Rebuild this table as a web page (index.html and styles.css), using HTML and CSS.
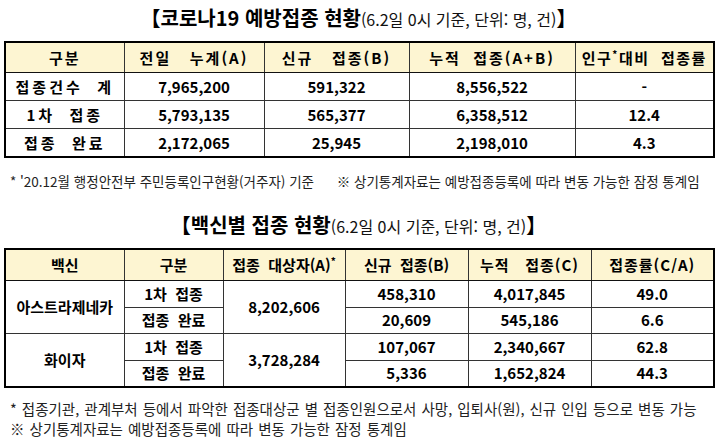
FILE: index.html
```html
<!DOCTYPE html>
<html lang="ko">
<head>
<meta charset="utf-8">
<link rel="stylesheet" href="styles.css">
</head>
<body>
<div class="page">
  <h1 class="title title-1"><span class="tb">【코로나19 예방접종 현황</span><span class="ts">(6.2일 0시 기준, 단위: 명, 건)</span><span class="tb">】</span></h1>
  <table class="grid grid-1">
    <colgroup>
      <col style="width:119px"><col style="width:140px"><col style="width:145px"><col style="width:166px"><col style="width:139px">
    </colgroup>
    <thead>
      <tr>
        <th class="sp2">구분</th>
        <th class="sp2">전일&nbsp;&nbsp;&nbsp;누계(A)</th>
        <th class="sp2">신규&nbsp;&nbsp;&nbsp;접종(B)</th>
        <th class="sp2">누적&nbsp;&nbsp;접종(A+B)</th>
        <th class="sp15">인구<sup>*</sup>대비&nbsp;&nbsp;접종률</th>
      </tr>
    </thead>
    <tbody>
      <tr><td class="sp3">접종건수&nbsp;&nbsp;계</td><td>7,965,200</td><td>591,322</td><td>8,556,522</td><td>-</td></tr>
      <tr><td class="sp3">1차&nbsp;&nbsp;접종</td><td>5,793,135</td><td>565,377</td><td>6,358,512</td><td>12.4</td></tr>
      <tr><td class="sp3">접종&nbsp;&nbsp;완료</td><td>2,172,065</td><td>25,945</td><td>2,198,010</td><td>4.3</td></tr>
    </tbody>
  </table>
  <p class="note note-1">* '20.12월 행정안전부 주민등록인구현황(거주자) 기준&nbsp;&nbsp;&nbsp;&nbsp;&nbsp; ※ 상기통계자료는 예방접종등록에 따라 변동 가능한 잠정 통계임</p>
  <h1 class="title title-2"><span class="tb">【백신별 접종 현황</span><span class="ts">(6.2일 0시 기준, 단위: 명, 건)</span><span class="tb">】</span></h1>
  <table class="grid grid-2">
    <colgroup>
      <col style="width:119px"><col style="width:99px"><col style="width:122px"><col style="width:123px"><col style="width:123px"><col style="width:123px">
    </colgroup>
    <thead>
      <tr>
        <th>백신</th>
        <th>구분</th>
        <th>접종&nbsp; 대상자(A)<sup>*</sup></th>
        <th>신규&nbsp; 접종(B)</th>
        <th class="sp1">누적&nbsp;&nbsp; 접종(C)</th>
        <th class="sp1">접종률(C/A)</th>
      </tr>
    </thead>
    <tbody>
      <tr><td rowspan="2">아스트라제네카</td><td>1차&nbsp; 접종</td><td rowspan="2">8,202,606</td><td>458,310</td><td>4,017,845</td><td>49.0</td></tr>
      <tr><td>접종&nbsp; 완료</td><td>20,609</td><td>545,186</td><td>6.6</td></tr>
      <tr><td rowspan="2">화이자</td><td>1차&nbsp; 접종</td><td rowspan="2">3,728,284</td><td>107,067</td><td>2,340,667</td><td>62.8</td></tr>
      <tr><td>접종&nbsp; 완료</td><td>5,336</td><td>1,652,824</td><td>44.3</td></tr>
    </tbody>
  </table>
  <div class="notes-2">
    <p class="note note-big">* 접종기관, 관계부처 등에서 파악한 접종대상군 별 접종인원으로서 사망, 입퇴사(원), 신규 인입 등으로 변동 가능</p>
    <p class="note note-big">※ 상기통계자료는 예방접종등록에 따라 변동 가능한 잠정 통계임</p>
  </div>
</div>
</body>
</html>
```
FILE: styles.css
```css
html, body {
  margin: 0;
  padding: 0;
  background: #ffffff;
}
body {
  width: 717px;
  height: 442px;
  overflow: hidden;
  font-family: "Noto Sans CJK KR", "Noto Sans", sans-serif;
  color: #000;
}
.page {
  display: flex;
  flex-direction: column;
  padding: 0 4px;
}
.title {
  margin: 0;
  text-align: center;
  font-size: 20px;
  font-weight: 400;
  line-height: 24px;
  white-space: nowrap;
  box-sizing: border-box;
}
.title-1 {
  padding-top: 6px;
  height: 41px;
}
.title-2 {
  margin-top: 22px;
  height: 35px;
}
.tb {
  font-size: 20px;
  font-weight: 700;
}
.ts {
  font-size: 16px;
  font-weight: 400;
  color: #111;
}
.grid {
  border-collapse: collapse;
  table-layout: fixed;
  width: 709px;
  border: 2px solid #000;
}
.grid th, .grid td {
  border: 1px solid #333;
  padding: 0;
  text-align: center;
  vertical-align: middle;
  font-size: 15px;
  font-weight: 700;
  white-space: nowrap;
  line-height: 18px;
}
.grid th {
  background: #fdf5d2;
  border-bottom: 1px solid #111;
}
.grid sup {
  font-size: 10px;
  line-height: 0;
  vertical-align: 6px;
}
.grid-1 th { height: 29px; }
.grid-1 td { height: 27px; }
.grid-2 th { height: 30px; }
.grid-2 td { height: 25.5px; }
.sp1 { letter-spacing: 1px; }
.sp15 { letter-spacing: 1.5px; }
.sp2 { letter-spacing: 2px; }
.sp3 { letter-spacing: 3px; }
.note {
  margin: 0;
  font-size: 13.5px;
  line-height: 20px;
  color: #222;
  white-space: nowrap;
  padding-left: 6px;
}
.note-big {
  font-size: 14.5px;
  word-spacing: 1px;
}
.note-1 {
  margin-top: 13px;
}
.notes-2 {
  margin-top: 11px;
}
```
